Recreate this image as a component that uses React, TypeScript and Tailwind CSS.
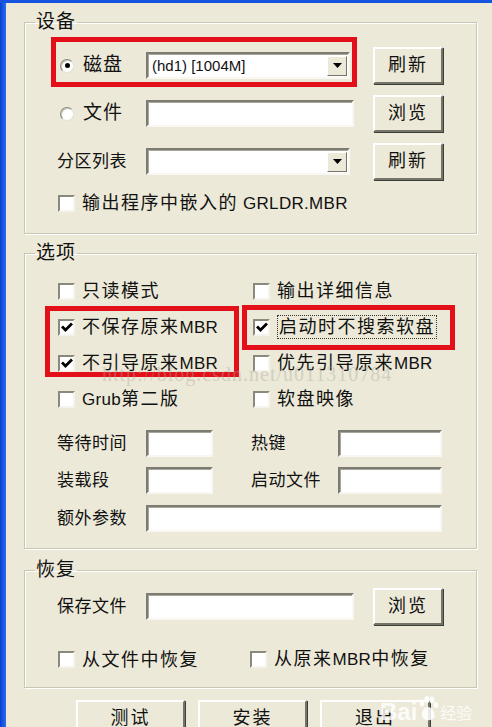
import React from "react";

const font = "font-['Liberation_Sans','Noto_Sans_CJK_SC',sans-serif]";

function Radio({ checked }: { checked?: boolean }) {
  return (
    <span className="relative flex h-[14px] w-[14px] shrink-0 items-center justify-center rounded-full border border-t-[#8a897e] border-l-[#8a897e] border-r-[#e4e2d6] border-b-[#e4e2d6] bg-white shadow-[inset_1px_1px_0_#c9c7ba]">
      {checked && <span className="h-[5px] w-[5px] rounded-full bg-black" />}
    </span>
  );
}

function Check({ checked }: { checked?: boolean }) {
  return (
    <span className="flex h-[17px] w-[17px] shrink-0 items-center justify-center border-2 border-t-[#8a897e] border-l-[#8a897e] border-r-[#f4f3ec] border-b-[#f4f3ec] bg-white">
      {checked && (
        <svg width="12" height="10" viewBox="0 0 12 10">
          <path d="M1 4.5 L4.5 8 L11 1.5" fill="none" stroke="#000" strokeWidth="2.8" />
        </svg>
      )}
    </span>
  );
}

// latin runs get no extra tracking, like Tahoma in the original dialog
function L({ children }: { children: React.ReactNode }) {
  return <span className="text-[17px] tracking-[0.3px]">{children}</span>;
}

function CheckItem({ label, checked, focus }: { label: React.ReactNode; checked?: boolean; focus?: boolean }) {
  return (
    <div className="flex items-center">
      <span className="ml-[1px]">
        <Check checked={checked} />
      </span>
      <span
        className={`ml-[7px] whitespace-nowrap text-[18px] leading-[22px] tracking-[1.5px] text-[#111] ${
          focus ? "border border-dotted border-[#333] px-[1px]" : ""
        }`}
      >
        {label}
      </span>
    </div>
  );
}

function Btn({ label, w = "w-[70px]" }: { label: string; w?: string }) {
  return (
    <button
      className={`${w} h-[37px] shrink-0 border-2 border-t-white border-l-white border-r-[#75746b] border-b-[#75746b] bg-[#ECE9D8] text-[18px] tracking-[2px] text-[#111] shadow-[1px_1px_0_#3f3f3a]`}
    >
      {label}
    </button>
  );
}

function TextBox({ w }: { w: string }) {
  return (
    <div
      className={`${w} h-[27px] shrink-0 border-2 border-t-[#7d7c72] border-l-[#7d7c72] border-r-[#f8f7f1] border-b-[#f8f7f1] bg-white shadow-[inset_1px_1px_0_#a8a79b]`}
    />
  );
}

function Combo({ value }: { value?: string }) {
  return (
    <div className="flex h-[27px] w-[204px] shrink-0 items-center border-2 border-t-[#7d7c72] border-l-[#7d7c72] border-r-[#f8f7f1] border-b-[#f8f7f1] bg-white pl-[4px] pr-[1px] shadow-[inset_1px_1px_0_#a8a79b]">
      <span className="flex-1 text-[15px] leading-[20px] text-[#111]">{value}</span>
      <span className="flex h-[20px] w-[20px] items-center justify-center border border-t-white border-l-white border-r-[#75746b] border-b-[#75746b] bg-[#ECE9D8]">
        <svg width="9" height="5" viewBox="0 0 9 5">
          <path d="M0 0 H9 L4.5 5 Z" fill="#000" />
        </svg>
      </span>
    </div>
  );
}

function Group({ title, children, cls }: { title: string; children: React.ReactNode; cls: string }) {
  return (
    <fieldset
      className={`${cls} ml-[18px] w-[453px] border border-[#c9c6b3] p-0 shadow-[inset_1px_1px_0_#fff,1px_1px_0_#fff]`}
    >
      <legend className="ml-[10px] px-[1px] text-[19px] leading-[20px] tracking-[1px] text-[#111]">{title}</legend>
      {children}
    </fieldset>
  );
}

function Label({ text, w = "w-[89px]" }: { text: string; w?: string }) {
  return <span className={`${w} shrink-0 text-[17px] tracking-[0.5px] text-[#111]`}>{text}</span>;
}

export default function App() {
  return (
    <div className={`relative h-[727px] w-[492px] overflow-hidden bg-[#ECE9D8] ${font}`}>
      <div className="h-[3px] w-full bg-[#1553e0]" />
      <div className="flex h-[724px]">
        <div className="w-[6px] shrink-0 bg-gradient-to-r from-[#0a3fd0] to-[#2a6ef0]" />
        <div className="flex-1">
          {/* 设备 */}
          <Group title="设备" cls="mt-[9px]">
            <div className="flex flex-col pb-[11px] pl-[32px] pt-[15px]">
              <div className="flex h-[37px] items-center">
                <div className="flex w-[89px] shrink-0 items-center">
                  <span className="ml-[3px]">
                    <Radio checked />
                  </span>
                  <span className="ml-[9px] text-[19px] tracking-[1px] text-[#111]">磁盘</span>
                </div>
                <Combo value="(hd1) [1004M]" />
                <div className="ml-[23px]">
                  <Btn label="刷新" />
                </div>
              </div>
              <div className="mt-[11px] flex h-[37px] items-center">
                <div className="flex w-[89px] shrink-0 items-center">
                  <span className="ml-[3px]">
                    <Radio />
                  </span>
                  <span className="ml-[9px] text-[19px] tracking-[1px] text-[#111]">文件</span>
                </div>
                <TextBox w="w-[208px]" />
                <div className="ml-[19px]">
                  <Btn label="浏览" />
                </div>
              </div>
              <div className="mt-[11px] flex h-[37px] items-center">
                <Label text="分区列表" />
                <Combo />
                <div className="ml-[23px]">
                  <Btn label="刷新" />
                </div>
              </div>
              <div className="mt-[5px] flex h-[37px] items-center">
                <CheckItem
                  label={
                    <>
                      输出程序中嵌入的<L> GRLDR.MBR</L>
                    </>
                  }
                />
              </div>
            </div>
          </Group>

          {/* 选项 */}
          <Group title="选项" cls="mt-[9px]">
            <div className="flex flex-col pb-[16px] pl-[32px] pt-[10px]">
              <div className="grid grid-cols-[194px_1fr] grid-rows-[36px_36px_36px_36px] items-center">
                <CheckItem label="只读模式" />
                <div className="ml-[1px]">
                  <CheckItem label="输出详细信息" />
                </div>
                <CheckItem label={<>不保存原来<L>MBR</L></>} checked />
                <div className="ml-[1px]">
                  <CheckItem label="启动时不搜索软盘" checked focus />
                </div>
                <CheckItem label={<>不引导原来<L>MBR</L></>} checked />
                <div className="ml-[1px]">
                  <CheckItem label={<>优先引导原来<L>MBR</L></>} />
                </div>
                <CheckItem label={<><L>Grub</L>第二版</>} />
                <div className="ml-[1px]">
                  <CheckItem label="软盘映像" />
                </div>
              </div>
              <div className="mt-[13px] flex h-[27px] items-center">
                <Label text="等待时间" />
                <TextBox w="w-[67px]" />
                <div className="ml-[38px] flex items-center">
                  <Label text="热键" w="w-[87px]" />
                  <TextBox w="w-[104px]" />
                </div>
              </div>
              <div className="mt-[10px] flex h-[27px] items-center">
                <Label text="装载段" />
                <TextBox w="w-[67px]" />
                <div className="ml-[38px] flex items-center">
                  <Label text="启动文件" w="w-[87px]" />
                  <TextBox w="w-[104px]" />
                </div>
              </div>
              <div className="mt-[11px] flex h-[27px] items-center">
                <Label text="额外参数" />
                <TextBox w="w-[296px]" />
              </div>
            </div>
          </Group>

          {/* 恢复 */}
          <Group title="恢复" cls="mt-[11px]">
            <div className="flex flex-col pb-[19px] pl-[32px] pt-[8px]">
              <div className="flex h-[37px] items-center">
                <Label text="保存文件" />
                <TextBox w="w-[208px]" />
                <div className="ml-[19px]">
                  <Btn label="浏览" />
                </div>
              </div>
              <div className="mt-[23px] grid h-[20px] grid-cols-[192px_1fr] items-center">
                <CheckItem label="从文件中恢复" />
                <CheckItem label={<>从原来<L>MBR</L>中恢复</>} />
              </div>
            </div>
          </Group>

          <div className="ml-[70px] mt-[12px] flex gap-[13px]">
            <Btn label="测试" w="w-[109px]" />
            <Btn label="安装" w="w-[109px]" />
            <Btn label="退出" w="w-[110px]" />
          </div>
        </div>
      </div>

      {/* red annotation boxes */}
      <div className="absolute left-[51px] top-[37px] h-[50px] w-[306px] border-[5px] border-[#e3101a]" />
      <div className="absolute left-[45px] top-[306px] h-[71px] w-[194px] border-[5px] border-[#e3101a]" />
      <div className="absolute left-[242px] top-[305px] h-[45px] w-[213px] border-[5px] border-[#e3101a]" />

      {/* watermarks */}
      <div className="pointer-events-none absolute left-[102px] top-[364px] font-['Liberation_Serif',serif] text-[20px] leading-[20px] tracking-[1px] text-[#a9a69a]/40">
        http://blog.csdn.net/u011310784
      </div>
      <div className="pointer-events-none absolute left-[380px] top-[696px] flex items-end text-white/80">
        <span className="font-['Liberation_Sans',sans-serif] text-[24px] font-bold leading-[24px]">Bai</span>
        <svg width="22" height="26" viewBox="0 0 22 26" className="mb-[2px]">
          <g fill="#fff" fillOpacity="0.85">
            <ellipse cx="5" cy="7" rx="2.5" ry="3.5" />
            <ellipse cx="10" cy="3.5" rx="2.5" ry="3.5" />
            <ellipse cx="15" cy="4" rx="2.5" ry="3.5" />
            <ellipse cx="19" cy="9" rx="2.3" ry="3" />
            <path d="M11 11 C6 11 3 18 6 22 C9 25 14 25 17 22 C19 19 16 11 11 11 Z" />
          </g>
        </svg>
        <span className="ml-[1px] text-[16px] leading-[20px]">经验</span>
      </div>
    </div>
  );
}
